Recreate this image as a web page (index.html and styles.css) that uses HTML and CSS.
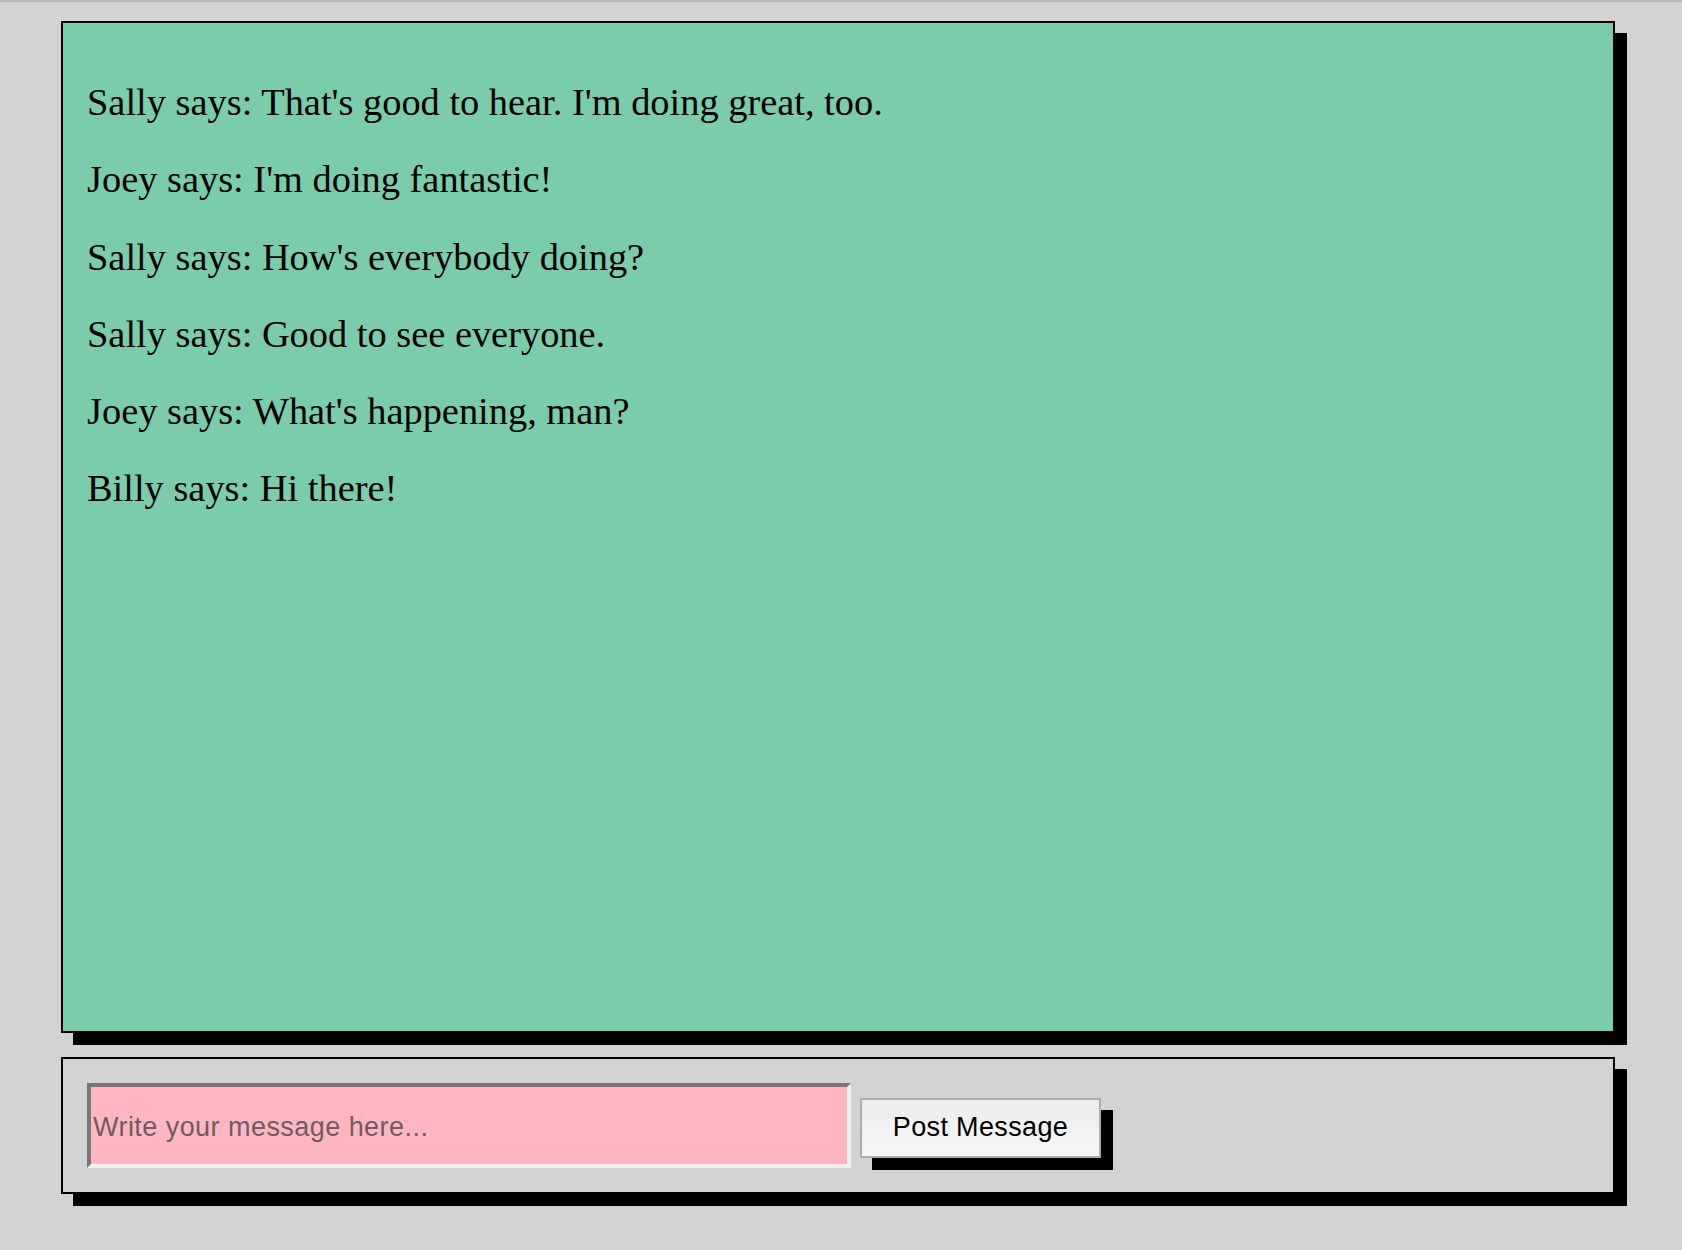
FILE: index.html
```html
<!DOCTYPE html>
<html lang="en">
<head>
<meta charset="utf-8">
<title>Chat</title>
<link rel="stylesheet" href="styles.css">
</head>
<body>
  <div class="chat-log">
    <p class="msg">Sally says: That's good to hear. I'm doing great, too.</p>
    <p class="msg">Joey says: I'm doing fantastic!</p>
    <p class="msg">Sally says: How's everybody doing?</p>
    <p class="msg">Sally says: Good to see everyone.</p>
    <p class="msg">Joey says: What's happening, man?</p>
    <p class="msg">Billy says: Hi there!</p>
  </div>
  <form class="composer">
    <input class="composer-input" type="text" placeholder="Write your message here...">
    <button class="composer-btn" type="button">Post Message</button>
  </form>
</body>
</html>
```

FILE: styles.css
```css
html, body {
  margin: 0;
  padding: 0;
}

body {
  background: #d3d3d3;
  border-top: 2px solid #b9b9b9;
  min-height: 1248px;
  box-sizing: border-box;
  overflow: hidden;
}

.chat-log {
  box-sizing: border-box;
  margin: 19px 0 0 61px;
  width: 1554px;
  height: 1012px;
  padding: 24px;
  border: 2px solid #000;
  background: #7bccaa;
  box-shadow: 12px 12px 0 #000;
  overflow: hidden;
}

.msg {
  margin: 33px 0;
  font-family: "Liberation Serif", "Times New Roman", serif;
  font-size: 38.4px;
  line-height: 44.3px;
  color: #000;
}

.composer {
  box-sizing: border-box;
  margin: 24px 0 0 61px;
  width: 1554px;
  padding: 24px;
  border: 2px solid #000;
  background: #d3d3d3;
  box-shadow: 12px 12px 0 #000;
  display: flex;
  align-items: baseline;
  gap: 9px;
}

.composer-input {
  box-sizing: border-box;
  width: 764px;
  height: 85px;
  margin: 0;
  padding: 4px 2px 0;
  border-style: solid;
  border-width: 4px;
  border-color: #777 #efefef #efefef #777;
  background: #ffb6c1;
  font-family: "Liberation Sans", Arial, sans-serif;
  font-size: 27px;
  letter-spacing: 0.45px;
  color: #000;
  outline: none;
}

.composer-input::placeholder {
  color: #6f5c62;
  opacity: 1;
}

.composer-btn {
  box-sizing: border-box;
  width: 241px;
  height: 60px;
  margin: 0;
  padding: 0;
  border: 2px solid #adadad;
  background: linear-gradient(#ececec, #f6f6f6);
  box-shadow: 12px 12px 0 #000;
  font-family: "Liberation Sans", Arial, sans-serif;
  font-size: 27px;
  letter-spacing: 0.35px;
  color: #000;
  cursor: pointer;
}
```
